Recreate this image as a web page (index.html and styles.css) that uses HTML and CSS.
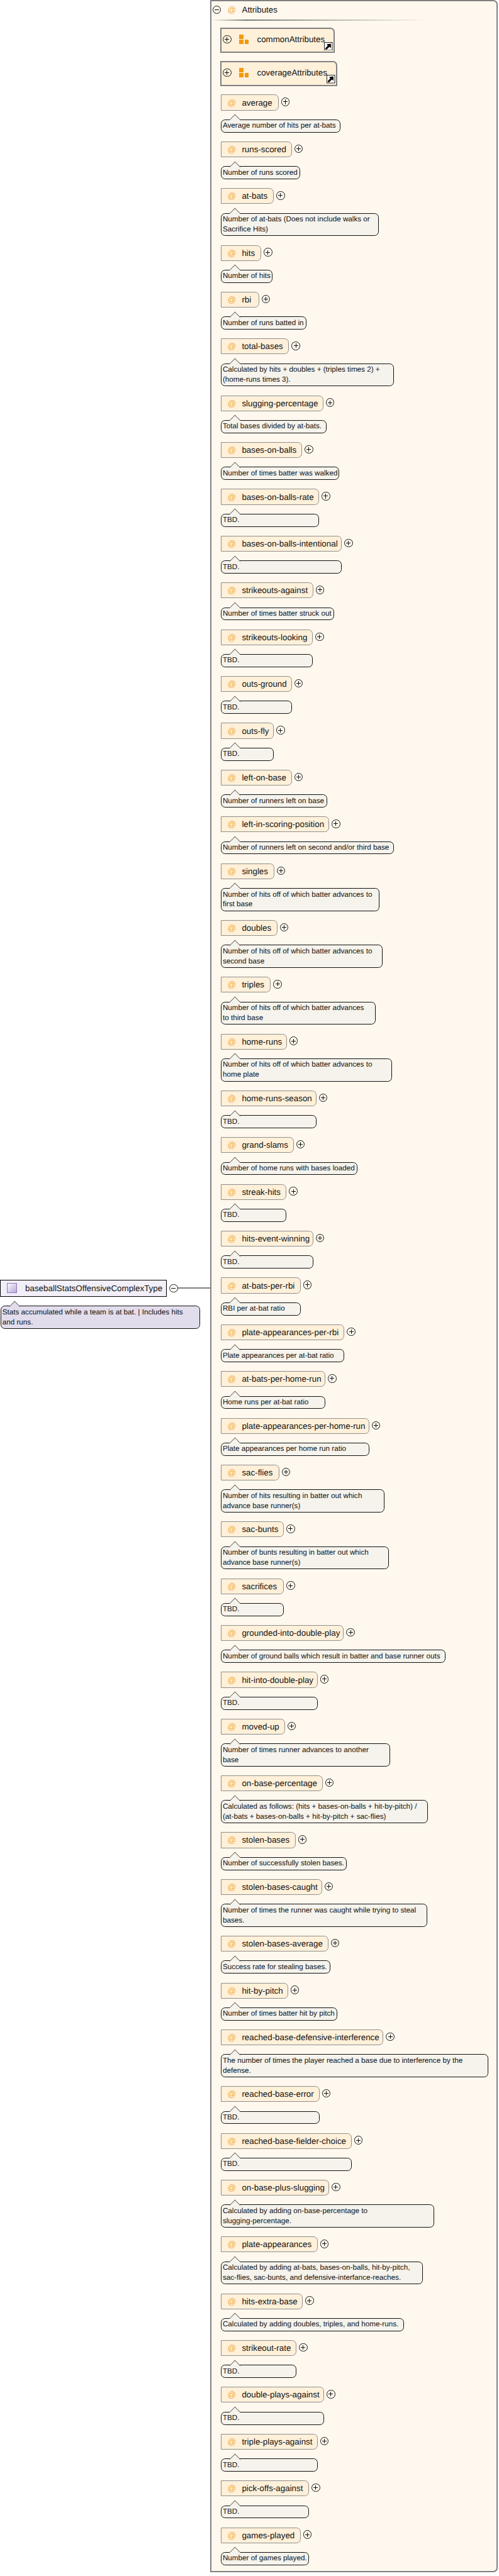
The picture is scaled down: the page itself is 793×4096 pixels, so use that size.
FILE: index.html
```html
<!DOCTYPE html>
<html lang="en">
<head>
<meta charset="utf-8">
<title>baseballStatsOffensiveComplexType</title>
<link rel="stylesheet" href="styles.css">
</head>
<body>
<main class="root">
  <aside class="type-col">
    <div class="type-line">
      <div class="type-box"><span class="type-icon"></span><span>baseballStatsOffensiveComplexType</span></div>
      <span class="toggle type-toggle"></span>
      <span class="connector"></span>
    </div>
    <div class="note type-note">Stats accumulated while a team is at bat. | Includes hits<br>and runs.</div>
  </aside>
  <section class="frame">
    <header class="head"><span class="toggle"></span><span class="at head-at">@</span><span>Attributes</span></header>
    <div class="head-rule"></div>
    <div class="groups">
      <div class="group" style="width:182px"><span class="toggle plus group-toggle"></span><span class="group-icon"><i></i><i></i><i></i></span><span>commonAttributes</span><svg class="link" viewBox="0 0 16 16"><rect x="0.5" y="0.5" width="15" height="15" fill="#fff" stroke="#000"/><path d="M3 14 L2 12 L7 7 L5 4 L13 3 L13 11 L10 9 L5 14 Z" fill="#000"/></svg></div>
      <div class="group" style="width:186.2px"><span class="toggle plus group-toggle"></span><span class="group-icon"><i></i><i></i><i></i></span><span>coverageAttributes</span><svg class="link" viewBox="0 0 16 16"><rect x="0.5" y="0.5" width="15" height="15" fill="#fff" stroke="#000"/><path d="M3 14 L2 12 L7 7 L5 4 L13 3 L13 11 L10 9 L5 14 Z" fill="#000"/></svg></div>
    </div>
    <div class="rows">
      <div class="row"><div class="line"><div class="attr" style="width:91.6px"><span class="at">@</span><span>average</span></div><span class="toggle plus"></span></div><div class="note" style="width:189.5px">Average number of hits per at-bats</div></div>
      <div class="row"><div class="line"><div class="attr" style="width:112.5px"><span class="at">@</span><span>runs-scored</span></div><span class="toggle plus"></span></div><div class="note" style="width:125.8px">Number of runs scored</div></div>
      <div class="row"><div class="line"><div class="attr" style="width:84px"><span class="at">@</span><span>at-bats</span></div><span class="toggle plus"></span></div><div class="note" style="width:251.2px">Number of at-bats (Does not include walks or<br>Sacrifice Hits)</div></div>
      <div class="row"><div class="line"><div class="attr" style="width:64.1px"><span class="at">@</span><span>hits</span></div><span class="toggle plus"></span></div><div class="note" style="width:81.6px">Number of hits</div></div>
      <div class="row"><div class="line"><div class="attr" style="width:60.5px"><span class="at">@</span><span>rbi</span></div><span class="toggle plus"></span></div><div class="note" style="width:135.7px">Number of runs batted in</div></div>
      <div class="row"><div class="line"><div class="attr" style="width:108.2px"><span class="at">@</span><span>total-bases</span></div><span class="toggle plus"></span></div><div class="note" style="width:275.4px">Calculated by hits + doubles + (triples times 2) +<br>(home-runs times 3).</div></div>
      <div class="row"><div class="line"><div class="attr" style="width:162.6px"><span class="at">@</span><span>slugging-percentage</span></div><span class="toggle plus"></span></div><div class="note" style="width:167.5px">Total bases divided by at-bats.</div></div>
      <div class="row"><div class="line"><div class="attr" style="width:129.1px"><span class="at">@</span><span>bases-on-balls</span></div><span class="toggle plus"></span></div><div class="note" style="width:187.7px">Number of times batter was walked</div></div>
      <div class="row"><div class="line"><div class="attr" style="width:156px"><span class="at">@</span><span>bases-on-balls-rate</span></div><span class="toggle plus"></span></div><div class="note" style="width:156px">TBD.</div></div>
      <div class="row"><div class="line"><div class="attr" style="width:192px"><span class="at">@</span><span>bases-on-balls-intentional</span></div><span class="toggle plus"></span></div><div class="note" style="width:192px">TBD.</div></div>
      <div class="row"><div class="line"><div class="attr" style="width:146.9px"><span class="at">@</span><span>strikeouts-against</span></div><span class="toggle plus"></span></div><div class="note" style="width:180.2px">Number of times batter struck out</div></div>
      <div class="row"><div class="line"><div class="attr" style="width:146px"><span class="at">@</span><span>strikeouts-looking</span></div><span class="toggle plus"></span></div><div class="note" style="width:146px">TBD.</div></div>
      <div class="row"><div class="line"><div class="attr" style="width:112.5px"><span class="at">@</span><span>outs-ground</span></div><span class="toggle plus"></span></div><div class="note" style="width:112.5px">TBD.</div></div>
      <div class="row"><div class="line"><div class="attr" style="width:84px"><span class="at">@</span><span>outs-fly</span></div><span class="toggle plus"></span></div><div class="note" style="width:84px">TBD.</div></div>
      <div class="row"><div class="line"><div class="attr" style="width:112.5px"><span class="at">@</span><span>left-on-base</span></div><span class="toggle plus"></span></div><div class="note" style="width:169.3px">Number of runners left on base</div></div>
      <div class="row"><div class="line"><div class="attr" style="width:172px"><span class="at">@</span><span>left-in-scoring-position</span></div><span class="toggle plus"></span></div><div class="note" style="width:275.4px">Number of runners left on second and/or third base</div></div>
      <div class="row"><div class="line"><div class="attr" style="width:84.9px"><span class="at">@</span><span>singles</span></div><span class="toggle plus"></span></div><div class="note" style="width:252.1px">Number of hits off of which batter advances to<br>first base</div></div>
      <div class="row"><div class="line"><div class="attr" style="width:89.8px"><span class="at">@</span><span>doubles</span></div><span class="toggle plus"></span></div><div class="note" style="width:257px">Number of hits off of which batter advances to<br>second base</div></div>
      <div class="row"><div class="line"><div class="attr" style="width:79.2px"><span class="at">@</span><span>triples</span></div><span class="toggle plus"></span></div><div class="note" style="width:246.1px">Number of hits off of which batter advances<br>to third base</div></div>
      <div class="row"><div class="line"><div class="attr" style="width:104.9px"><span class="at">@</span><span>home-runs</span></div><span class="toggle plus"></span></div><div class="note" style="width:272.1px">Number of hits off of which batter advances to<br>home plate</div></div>
      <div class="row"><div class="line"><div class="attr" style="width:151.8px"><span class="at">@</span><span>home-runs-season</span></div><span class="toggle plus"></span></div><div class="note" style="width:151.8px">TBD.</div></div>
      <div class="row"><div class="line"><div class="attr" style="width:115.8px"><span class="at">@</span><span>grand-slams</span></div><span class="toggle plus"></span></div><div class="note" style="width:217.4px">Number of home runs with bases loaded</div></div>
      <div class="row"><div class="line"><div class="attr" style="width:104.3px"><span class="at">@</span><span>streak-hits</span></div><span class="toggle plus"></span></div><div class="note" style="width:104.3px">TBD.</div></div>
      <div class="row"><div class="line"><div class="attr" style="width:146.9px"><span class="at">@</span><span>hits-event-winning</span></div><span class="toggle plus"></span></div><div class="note" style="width:146.9px">TBD.</div></div>
      <div class="row"><div class="line"><div class="attr" style="width:126.7px"><span class="at">@</span><span>at-bats-per-rbi</span></div><span class="toggle plus"></span></div><div class="note" style="width:126.7px">RBI per at-bat ratio</div></div>
      <div class="row"><div class="line"><div class="attr" style="width:196.2px"><span class="at">@</span><span>plate-appearances-per-rbi</span></div><span class="toggle plus"></span></div><div class="note" style="width:196.2px">Plate appearances per at-bat ratio</div></div>
      <div class="row"><div class="line"><div class="attr" style="width:166px"><span class="at">@</span><span>at-bats-per-home-run</span></div><span class="toggle plus"></span></div><div class="note" style="width:166px">Home runs per at-bat ratio</div></div>
      <div class="row"><div class="line"><div class="attr" style="width:235.5px"><span class="at">@</span><span>plate-appearances-per-home-run</span></div><span class="toggle plus"></span></div><div class="note" style="width:235.5px">Plate appearances per home run ratio</div></div>
      <div class="row"><div class="line"><div class="attr" style="width:92.5px"><span class="at">@</span><span>sac-flies</span></div><span class="toggle plus"></span></div><div class="note" style="width:259.7px">Number of hits resulting in batter out which<br>advance base runner(s)</div></div>
      <div class="row"><div class="line"><div class="attr" style="width:100.1px"><span class="at">@</span><span>sac-bunts</span></div><span class="toggle plus"></span></div><div class="note" style="width:267.2px">Number of bunts resulting in batter out which<br>advance base runner(s)</div></div>
      <div class="row"><div class="line"><div class="attr" style="width:100.1px"><span class="at">@</span><span>sacrifices</span></div><span class="toggle plus"></span></div><div class="note" style="width:100.1px">TBD.</div></div>
      <div class="row"><div class="line"><div class="attr" style="width:195.3px"><span class="at">@</span><span>grounded-into-double-play</span></div><span class="toggle plus"></span></div><div class="note" style="width:357.3px">Number of ground balls which result in batter and base runner outs</div></div>
      <div class="row"><div class="line"><div class="attr" style="width:153.6px"><span class="at">@</span><span>hit-into-double-play</span></div><span class="toggle plus"></span></div><div class="note" style="width:153.6px">TBD.</div></div>
      <div class="row"><div class="line"><div class="attr" style="width:101.6px"><span class="at">@</span><span>moved-up</span></div><span class="toggle plus"></span></div><div class="note" style="width:268.7px">Number of times runner advances to another<br>base</div></div>
      <div class="row"><div class="line"><div class="attr" style="width:161.7px"><span class="at">@</span><span>on-base-percentage</span></div><span class="toggle plus"></span></div><div class="note" style="width:328.6px">Calculated as follows: (hits + bases-on-balls + hit-by-pitch) /<br>(at-bats + bases-on-balls + hit-by-pitch + sac-flies)</div></div>
      <div class="row"><div class="line"><div class="attr" style="width:118.5px"><span class="at">@</span><span>stolen-bases</span></div><span class="toggle plus"></span></div><div class="note" style="width:200.4px">Number of successfully stolen bases.</div></div>
      <div class="row"><div class="line"><div class="attr" style="width:160.8px"><span class="at">@</span><span>stolen-bases-caught</span></div><span class="toggle plus"></span></div><div class="note" style="width:328.3px">Number of times the runner was caught while trying to steal<br>bases.</div></div>
      <div class="row"><div class="line"><div class="attr" style="width:170.5px"><span class="at">@</span><span>stolen-bases-average</span></div><span class="toggle plus"></span></div><div class="note" style="width:174.4px">Success rate for stealing bases.</div></div>
      <div class="row"><div class="line"><div class="attr" style="width:106.7px"><span class="at">@</span><span>hit-by-pitch</span></div><span class="toggle plus"></span></div><div class="note" style="width:185.3px">Number of times batter hit by pitch</div></div>
      <div class="row"><div class="line"><div class="attr" style="width:258.2px"><span class="at">@</span><span>reached-base-defensive-interference</span></div><span class="toggle plus"></span></div><div class="note" style="width:425.3px">The number of times the player reached a base due to interference by the<br>defense.</div></div>
      <div class="row"><div class="line"><div class="attr" style="width:156.9px"><span class="at">@</span><span>reached-base-error</span></div><span class="toggle plus"></span></div><div class="note" style="width:156.9px">TBD.</div></div>
      <div class="row"><div class="line"><div class="attr" style="width:207.7px"><span class="at">@</span><span>reached-base-fielder-choice</span></div><span class="toggle plus"></span></div><div class="note" style="width:207.7px">TBD.</div></div>
      <div class="row"><div class="line"><div class="attr" style="width:172px"><span class="at">@</span><span>on-base-plus-slugging</span></div><span class="toggle plus"></span></div><div class="note" style="width:338.9px">Calculated by adding on-base-percentage to<br>slugging-percentage.</div></div>
      <div class="row"><div class="line"><div class="attr" style="width:153.6px"><span class="at">@</span><span>plate-appearances</span></div><span class="toggle plus"></span></div><div class="note" style="width:320.7px">Calculated by adding at-bats, bases-on-balls, hit-by-pitch,<br>sac-flies, sac-bunts, and defensive-interfance-reaches.</div></div>
      <div class="row"><div class="line"><div class="attr" style="width:130px"><span class="at">@</span><span>hits-extra-base</span></div><span class="toggle plus"></span></div><div class="note" style="width:290.5px">Calculated by adding doubles, triples, and home-runs.</div></div>
      <div class="row"><div class="line"><div class="attr" style="width:120px"><span class="at">@</span><span>strikeout-rate</span></div><span class="toggle plus"></span></div><div class="note" style="width:120px">TBD.</div></div>
      <div class="row"><div class="line"><div class="attr" style="width:164.1px"><span class="at">@</span><span>double-plays-against</span></div><span class="toggle plus"></span></div><div class="note" style="width:164.1px">TBD.</div></div>
      <div class="row"><div class="line"><div class="attr" style="width:153.6px"><span class="at">@</span><span>triple-plays-against</span></div><span class="toggle plus"></span></div><div class="note" style="width:153.6px">TBD.</div></div>
      <div class="row"><div class="line"><div class="attr" style="width:140px"><span class="at">@</span><span>pick-offs-against</span></div><span class="toggle plus"></span></div><div class="note" style="width:140px">TBD.</div></div>
      <div class="row"><div class="line"><div class="attr" style="width:126.7px"><span class="at">@</span><span>games-played</span></div><span class="toggle plus"></span></div><div class="note" style="width:140px">Number of games played.</div></div>
    </div>
  </section>
</main>
</body>
</html>
```
FILE: styles.css
```css
* { box-sizing: border-box; }

html, body {
  margin: 0;
  padding: 0;
  background: #fff;
}

body {
  font-family: "Liberation Sans", Arial, sans-serif;
  font-size: 13.376px;
  color: #111;
  text-rendering: geometricPrecision;
}

.root {
  display: flex;
  align-items: flex-start;
  width: 793px;
}

/* left: the complex type */
.type-col {
  width: 334px;
  flex: none;
  margin-top: 2034.8px;
}

.type-line {
  display: flex;
  align-items: center;
}

.type-box {
  width: 264.6px;
  height: 27.2px;
  flex: none;
  display: flex;
  align-items: center;
  padding-left: 9.9px;
  background: #f2eff8;
  border: 1px solid #000;
  white-space: nowrap;
}

.type-icon {
  width: 16px;
  height: 16px;
  flex: none;
  margin-right: 13.2px;
  border: 1px solid #9078b8;
  background: linear-gradient(135deg, #fbfaff 0%, #b9a8d8 100%);
}

.type-toggle {
  margin-left: 4.6px;
}

.connector {
  flex: 1;
  height: 2px;
  background: #808080;
}

.type-col .type-note {
  width: 316.8px;
  margin: 14.2px 0 0 0.8px;
  background: #e2ddec;
}

.type-col .type-note::before {
  background: #e2ddec;
}

/* right: the attributes frame */
.frame {
  width: 457px;
  flex: none;
  background: #fff8ee;
  border: 2px solid #808080;
  border-radius: 0 7px 7px 0;
  padding-bottom: 8.9px;
}

.head {
  height: 27px;
  display: flex;
  align-items: center;
  padding-left: 1.7px;
}

.head-at {
  width: 23px;
  margin-left: 10.4px;
}

.head-rule {
  width: 344px;
  height: 2px;
  margin-top: 2px;
  background: linear-gradient(90deg, #fff8ee 0%, #7c7c7c 16%, #a8a8a0 45%, #fff8ee 100%);
}

.groups {
  display: flex;
  flex-direction: column;
  gap: 12.8px;
  margin: 11.3px 0 0 14.2px;
}

.group {
  position: relative;
  height: 39.9px;
  display: flex;
  align-items: center;
  padding-bottom: 3px;
  padding-left: 2px;
  background: #fff0d9;
  border: 2px solid #808080;
  border-top-right-radius: 6.7px;
  white-space: nowrap;
}

.group-toggle {
  margin-right: 12.8px;
}

.group-icon {
  width: 15.1px;
  height: 15.3px;
  flex: none;
  display: grid;
  grid-template-columns: 6.7px 6.7px;
  grid-template-rows: 7px 7px;
  gap: 1.3px 1.7px;
  margin-right: 13px;
}

.group-icon i {
  background: #f09a10;
}

.group-icon i:first-child {
  grid-column: 1 / 3;
  width: 6.7px;
}

.link {
  position: absolute;
  right: 1.7px;
  bottom: 2px;
  width: 13.4px;
  height: 13.4px;
}

.rows {
  display: flex;
  flex-direction: column;
  gap: 14.22px;
  margin: 13.58px 0 0 15px;
}

.row {
  display: flex;
  flex-direction: column;
  gap: 14.22px;
}

.line {
  display: flex;
  align-items: center;
}

.attr {
  height: 25.1px;
  flex: none;
  display: flex;
  align-items: center;
  padding-left: 9.4px;
  background: #fff0d9;
  border: 1px solid #8e8e8e;
  border-radius: 0 6.7px 6.7px 0;
  white-space: nowrap;
}

.at {
  width: 23px;
  flex: none;
  color: #eeab3e;
}

.toggle {
  position: relative;
  width: 13.4px;
  height: 13.4px;
  flex: none;
  border: 1px solid #111;
  border-radius: 50%;
}

.toggle::before {
  content: "";
  position: absolute;
  left: 2.2px;
  right: 2.2px;
  top: 5.2px;
  height: 1px;
  background: #111;
}

.plus::after {
  content: "";
  position: absolute;
  top: 2.2px;
  bottom: 2.2px;
  left: 5.2px;
  width: 1px;
  background: #111;
}

.line .toggle {
  margin: -2px 0 0 4.2px;
}

.note {
  position: relative;
  padding: 1.5px 1.9px;
  font-size: 11.7px;
  line-height: 15.88px;
  white-space: nowrap;
  background: #f5f3ec;
  border: 1px solid #111;
  border-radius: 6.7px;
}

/* the callout tip: only the upper half of the turned square, so it never covers the text */
.note::before {
  content: "";
  position: absolute;
  left: 14.8px;
  top: -6.6px;
  width: 11.8px;
  height: 11.8px;
  background: #f5f3ec;
  border-top: 1px solid #444;
  border-left: 1px solid #444;
  transform: rotate(45deg);
  clip-path: polygon(0 0, 100% 0, 100% 14%, 14% 100%, 0 100%);
}
```
